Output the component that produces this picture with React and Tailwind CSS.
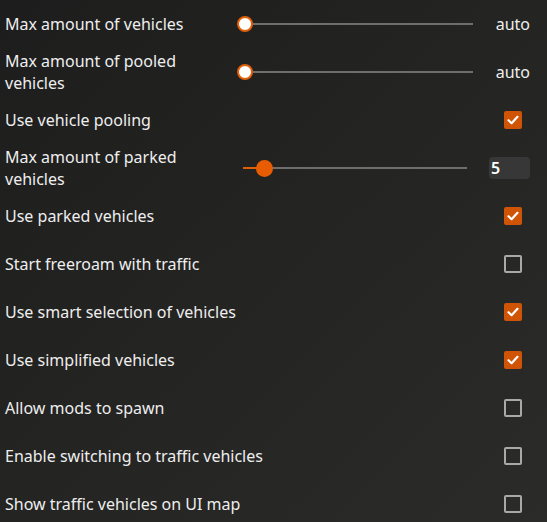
import React from "react";

const font = { fontFamily: '"Noto Sans", "Open Sans", sans-serif' };

function Check({ checked }) {
  if (checked) {
    return (
      <div className="w-[18px] h-[18px] rounded-[2px] bg-[#d05406] flex items-center justify-center">
        <svg width="12" height="10" viewBox="0 0 12 10">
          <path d="M1.5 5.2 L4.6 8.2 L10.5 1.8" fill="none" stroke="#ffffff" strokeWidth="2.2" strokeLinecap="round" strokeLinejoin="round" />
        </svg>
      </div>
    );
  }
  return <div className="w-[18px] h-[18px] rounded-[2px] border-2 border-[#a9a9a9]" />;
}

function CheckRow({ label, checked }) {
  return (
    <div className="h-[48px] flex items-center pl-[5px] pr-[25px]">
      <div className="flex-1 text-[16px] text-[#eeeeee]">{label}</div>
      <Check checked={checked} />
    </div>
  );
}

function AutoSlider({ label }) {
  return (
    <div className="h-[48px] flex items-center pl-[5px] pr-[17px]">
      <div className="w-[210px] text-[16px] leading-[22px] text-[#eeeeee]">{label}</div>
      <div className="relative ml-[22px] w-[236px] h-[16px] flex items-center">
        <div className="ml-[8px] flex-1 h-[2px] bg-[#6e6e6e]" />
        <div className="absolute left-0 top-0 w-[16px] h-[16px] rounded-full bg-white border-2 border-[#e0600a]" />
      </div>
      <div className="ml-auto text-[16px] text-[#eeeeee]">auto</div>
    </div>
  );
}

function ParkedSlider() {
  return (
    <div className="h-[48px] flex items-center pl-[5px] pr-[17px]">
      <div className="w-[210px] text-[16px] leading-[22px] text-[#eeeeee]">Max amount of parked vehicles</div>
      <div className="relative ml-[28px] w-[224px] h-[17px] flex items-center">
        <div className="w-[21px] h-[2px] bg-[#e0600a]" />
        <div className="flex-1 h-[2px] bg-[#6e6e6e]" />
        <div className="absolute left-[13px] top-0 w-[17px] h-[17px] rounded-full bg-[#e85d04]" />
      </div>
      <div className="ml-auto w-[41px] h-[22px] rounded-[4px] bg-[#373737] flex items-center pl-[2px] text-[16px] font-semibold text-white">5</div>
    </div>
  );
}

export default function App() {
  return (
    <div
      style={font}
      className="w-[547px] h-[522px] overflow-hidden bg-gradient-to-br from-[#1d1d1d] via-[#242422] to-[#2b2b29]"
    >
      <AutoSlider label="Max amount of vehicles" />
      <AutoSlider label="Max amount of pooled vehicles" />
      <CheckRow label="Use vehicle pooling" checked />
      <ParkedSlider />
      <CheckRow label="Use parked vehicles" checked />
      <CheckRow label="Start freeroam with traffic" checked={false} />
      <CheckRow label="Use smart selection of vehicles" checked />
      <CheckRow label="Use simplified vehicles" checked />
      <CheckRow label="Allow mods to spawn" checked={false} />
      <CheckRow label="Enable switching to traffic vehicles" checked={false} />
      <CheckRow label="Show traffic vehicles on UI map" checked={false} />
    </div>
  );
}
